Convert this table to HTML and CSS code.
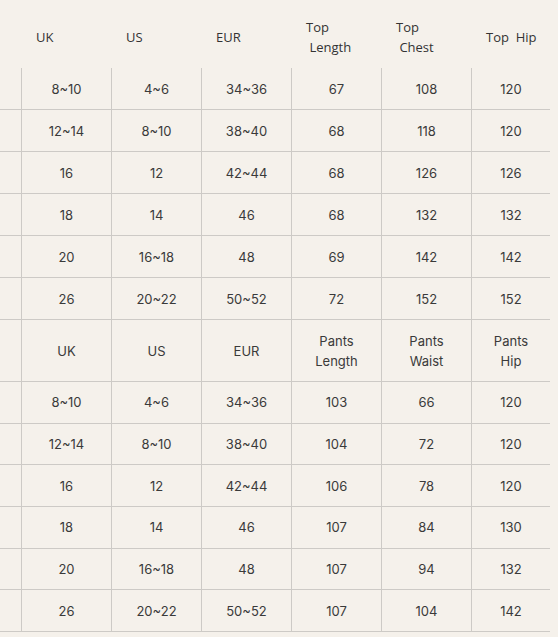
FILE: index.html
```html
<!DOCTYPE html>
<html>
<head>
<meta charset="utf-8">
<link rel="stylesheet" href="styles.css">
</head>
<body>
<div class="chart">
  <div class="hrow">
    <div class="hc"></div>
    <div class="hc">UK</div>
    <div class="hc">US</div>
    <div class="hc">EUR</div>
    <div class="hc">Top<br>&nbsp;Length</div>
    <div class="hc">Top<br>&nbsp;Chest</div>
    <div class="hc">Top&nbsp; Hip</div>
  </div>
  <div class="row"><div class="c"></div><div class="c">8~10</div><div class="c">4~6</div><div class="c">34~36</div><div class="c">67</div><div class="c">108</div><div class="c">120</div></div>
  <div class="row"><div class="c"></div><div class="c">12~14</div><div class="c">8~10</div><div class="c">38~40</div><div class="c">68</div><div class="c">118</div><div class="c">120</div></div>
  <div class="row"><div class="c"></div><div class="c">16</div><div class="c">12</div><div class="c">42~44</div><div class="c">68</div><div class="c">126</div><div class="c">126</div></div>
  <div class="row"><div class="c"></div><div class="c">18</div><div class="c">14</div><div class="c">46</div><div class="c">68</div><div class="c">132</div><div class="c">132</div></div>
  <div class="row"><div class="c"></div><div class="c">20</div><div class="c">16~18</div><div class="c">48</div><div class="c">69</div><div class="c">142</div><div class="c">142</div></div>
  <div class="row"><div class="c"></div><div class="c">26</div><div class="c">20~22</div><div class="c">50~52</div><div class="c">72</div><div class="c">152</div><div class="c">152</div></div>
  <div class="row tall"><div class="c"></div><div class="c">UK</div><div class="c">US</div><div class="c">EUR</div><div class="c">Pants<br>Length</div><div class="c">Pants<br>Waist</div><div class="c">Pants<br>Hip</div></div>
  <div class="row b2"><div class="c"></div><div class="c">8~10</div><div class="c">4~6</div><div class="c">34~36</div><div class="c">103</div><div class="c">66</div><div class="c">120</div></div>
  <div class="row b2"><div class="c"></div><div class="c">12~14</div><div class="c">8~10</div><div class="c">38~40</div><div class="c">104</div><div class="c">72</div><div class="c">120</div></div>
  <div class="row b2"><div class="c"></div><div class="c">16</div><div class="c">12</div><div class="c">42~44</div><div class="c">106</div><div class="c">78</div><div class="c">120</div></div>
  <div class="row b2"><div class="c"></div><div class="c">18</div><div class="c">14</div><div class="c">46</div><div class="c">107</div><div class="c">84</div><div class="c">130</div></div>
  <div class="row b2"><div class="c"></div><div class="c">20</div><div class="c">16~18</div><div class="c">48</div><div class="c">107</div><div class="c">94</div><div class="c">132</div></div>
  <div class="row b2"><div class="c"></div><div class="c">26</div><div class="c">20~22</div><div class="c">50~52</div><div class="c">107</div><div class="c">104</div><div class="c">142</div></div>
</div>
</body>
</html>
```
FILE: styles.css
```css
html, body {
  margin: 0;
  padding: 0;
  background: #f5f1eb;
}
body {
  overflow: hidden;
  color: #3a3a3a;
}
.chart {
  margin-left: -69px;
  width: 619px;
}
.hrow, .row {
  display: grid;
  grid-template-columns: 90px 90px 90px 90px 90px 90px 79px;
}
.hrow {
  height: 68px;
  font-family: "Open Sans", sans-serif;
  font-size: 13px;
  line-height: 20px;
  color: #333;
}
.hc {
  box-sizing: border-box;
  display: flex;
  align-items: center;
  padding-left: 15px;
  padding-top: 6px;
}
.row {
  height: 42px;
  font-family: "Inter", "Lato", sans-serif;
  font-size: 13px;
  line-height: 20px;
}
.row.tall { height: 62px; }
.row.b2 { height: 41.67px; }
.c {
  box-sizing: border-box;
  display: flex;
  align-items: center;
  justify-content: center;
  text-align: center;
  border-left: 1px solid #cdcac6;
  border-bottom: 1px solid #cdcac6;
}
.c:first-child { border-left: none; }
```
